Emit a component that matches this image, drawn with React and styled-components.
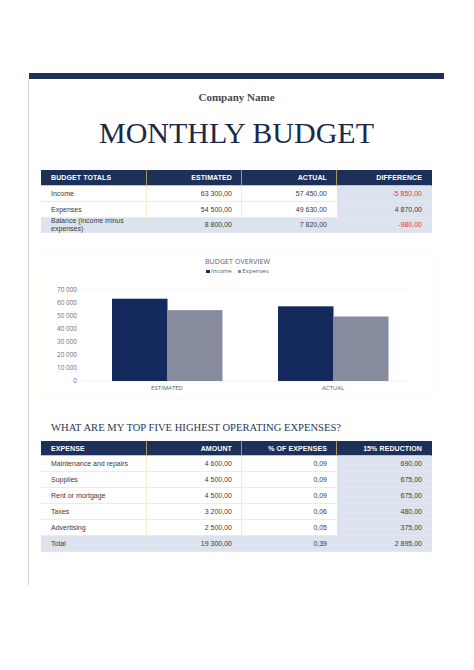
import React from 'react';
import styled, { createGlobalStyle } from 'styled-components';

const GlobalStyle = createGlobalStyle`
  html, body { margin: 0; padding: 0; background: #ffffff; }
  body { font-family: "Liberation Sans", Arial, sans-serif; }
`;

const Page = styled.div`
  margin: 73px 0 0 28px;
  width: 416px;
`;

const TopBar = styled.div`
  height: 6px;
  margin-left: 1px;
  background: #1f3158;
`;

const Sheet = styled.div`
  box-sizing: border-box;
  height: 506px;
  border-left: 1px solid #d4d4d4;
  padding-top: 11px;
  display: flex;
  flex-direction: column;
`;

const Company = styled.div`
  font-family: "Liberation Serif", "Times New Roman", serif;
  font-weight: bold;
  font-size: 11px;
  line-height: 14px;
  color: #4a4a4a;
  text-align: center;
`;

const Title = styled.h1`
  margin: 12px 0 0;
  font-family: "Liberation Serif", "Times New Roman", serif;
  font-weight: normal;
  font-size: 30px;
  line-height: 34px;
  color: #1b2947;
  text-align: center;
`;

const SectionTitle = styled.h2`
  margin: 21px 0 0 12px;
  padding-left: 10px;
  font-family: "Liberation Serif", "Times New Roman", serif;
  font-weight: normal;
  font-size: 10.6px;
  line-height: 14px;
  color: #2a3856;
`;

const Grid = styled.div`
  margin: ${p => p.$top}px 0 0 12px;
  width: 391px;
  display: grid;
  grid-template-columns: 106px 95px 95px 95px;
`;

const HeadCell = styled.div`
  box-sizing: border-box;
  height: ${p => p.$h}px;
  display: flex;
  align-items: center;
  justify-content: ${p => (p.$right ? 'flex-end' : 'flex-start')};
  padding: ${p => (p.$right ? '0 9px 0 0' : '0 0 0 10px')};
  background: #1d305a;
  color: #ffffff;
  font-weight: bold;
  font-size: 7px;
  letter-spacing: 0.1px;
  border-bottom: 1px solid #d8c874;
  border-right: 1px solid ${p => (p.$last ? '#1d305a' : '#a59a5c')};
`;

const Cell = styled.div`
  box-sizing: border-box;
  height: ${p => p.$h}px;
  display: flex;
  align-items: center;
  justify-content: ${p => (p.$right ? 'flex-end' : 'flex-start')};
  padding: ${p => (p.$right ? '0 9px 0 0' : '0 0 0 10px')};
  background: ${p => (p.$shade ? '#dce3ef' : '#ffffff')};
  color: ${p => (p.$red ? '#f0303a' : '#3b3b3b')};
  font-size: 7px;
  line-height: 8px;
  border-bottom: 1px solid ${p => (p.$shade ? '#e2e7f1' : '#f3eec9')};
  border-right: 1px solid ${p => (p.$sep ? '#f3eec9' : 'transparent')};
`;

const ChartBox = styled.div`
  box-sizing: border-box;
  margin: 22px 0 0 11px;
  width: 395px;
  height: 145px;
  border: 1px solid #fcfcef;
  padding-top: 1px;
  display: flex;
  flex-direction: column;
  align-items: center;
  font-family: "Open Sans", "Liberation Sans", sans-serif;
`;

const ChartTitle = styled.div`
  font-size: 7px;
  line-height: 10px;
  color: #555b66;
  letter-spacing: 0.1px;
`;

const Legend = styled.div`
  display: flex;
  gap: 6px;
  font-size: 6px;
  line-height: 9px;
  color: #555b66;
`;

const LegendItem = styled.span`
  display: flex;
  align-items: center;
  gap: 1px;
`;

const Swatch = styled.span`
  width: 3.5px;
  height: 3.5px;
  background: ${p => p.$color};
`;

const Plot = styled.svg`
  display: block;
  font-family: "Open Sans", "Liberation Sans", sans-serif;
`;

const NAVY = '#142a5c';
const GREY = '#868b9e';

const budgetRows = [
  { cells: ['Income', '63 300,00', '57 450,00', '-5 850,00'], red: true, h: 16 },
  { cells: ['Expenses', '54 500,00', '49 630,00', '4 870,00'], h: 16 },
  { cells: ['Balance (income minus expenses)', '8 800,00', '7 820,00', '-980,00'], red: true, h: 15, total: true },
];

const expenseRows = [
  { cells: ['Maintenance and repairs', '4 600,00', '0,09', '690,00'], h: 16 },
  { cells: ['Supplies', '4 500,00', '0,09', '675,00'], h: 16 },
  { cells: ['Rent or mortgage', '4 500,00', '0,09', '675,00'], h: 16 },
  { cells: ['Taxes', '3 200,00', '0,06', '480,00'], h: 16 },
  { cells: ['Advertising', '2 500,00', '0,05', '375,00'], h: 16 },
  { cells: ['Total', '19 300,00', '0,39', '2 895,00'], h: 16, total: true },
];

function DataTable({ top, headers, headH, rows }) {
  return (
    <Grid $top={top}>
      {headers.map((h, i) => (
        <HeadCell key={h} $h={headH} $right={i > 0} $last={i === 3}>
          {h}
        </HeadCell>
      ))}
      {rows.map((r, ri) =>
        r.cells.map((c, ci) => (
          <Cell
            key={`${ri}-${ci}`}
            $h={r.h}
            $right={ci > 0}
            $shade={r.total || ci === 3}
            $sep={!r.total && ci < 2}
            $red={r.red && ci === 3}
          >
            {c}
          </Cell>
        ))
      )}
    </Grid>
  );
}

function BudgetChart() {
  const base = 105;
  const scale = 91 / 70000;
  const ticks = [70000, 60000, 50000, 40000, 30000, 20000, 10000, 0];
  const bars = [
    { x: 71, v: 63300, c: NAVY },
    { x: 126, v: 54500, c: GREY },
    { x: 237, v: 57450, c: NAVY },
    { x: 292, v: 49630, c: GREY },
  ];
  const fmt = n => (n === 0 ? '0' : `${n / 1000} 000`);
  return (
    <ChartBox>
      <ChartTitle>BUDGET OVERVIEW</ChartTitle>
      <Legend>
        <LegendItem><Swatch $color={NAVY} />Income</LegendItem>
        <LegendItem><Swatch $color={GREY} />Expenses</LegendItem>
      </Legend>
      <Plot width="393" height="123" viewBox="0 0 393 123">
        <line x1="40" x2="368" y1={base - 70000 * scale} y2={base - 70000 * scale} stroke="#f3f3f3" strokeWidth="0.8" />
        <line x1="40" x2="368" y1={base} y2={base} stroke="#ececec" strokeWidth="0.8" />
        {ticks.map(t => (
          <text key={t} x="36" y={base - t * scale + 2} textAnchor="end" fontSize="6.4" fill="#6a6f78">
            {fmt(t)}
          </text>
        ))}
        {bars.map(b => (
          <rect key={b.x} x={b.x} y={base - b.v * scale} width="55.5" height={b.v * scale} fill={b.c} />
        ))}
        <text x="126" y="114" textAnchor="middle" fontSize="6" fill="#555b66">ESTIMATED</text>
        <text x="292" y="114" textAnchor="middle" fontSize="6" fill="#555b66">ACTUAL</text>
      </Plot>
    </ChartBox>
  );
}

export default function App() {
  return (
    <>
      <GlobalStyle />
      <Page>
        <TopBar />
        <Sheet>
          <Company>Company Name</Company>
          <Title>MONTHLY BUDGET</Title>
          <DataTable
            top={20}
            headH={16}
            headers={['BUDGET TOTALS', 'ESTIMATED', 'ACTUAL', 'DIFFERENCE']}
            rows={budgetRows}
          />
          <BudgetChart />
          <SectionTitle>WHAT ARE MY TOP FIVE HIGHEST OPERATING EXPENSES?</SectionTitle>
          <DataTable
            top={6}
            headH={15}
            headers={['EXPENSE', 'AMOUNT', '% OF EXPENSES', '15% REDUCTION']}
            rows={expenseRows}
          />
        </Sheet>
      </Page>
    </>
  );
}
